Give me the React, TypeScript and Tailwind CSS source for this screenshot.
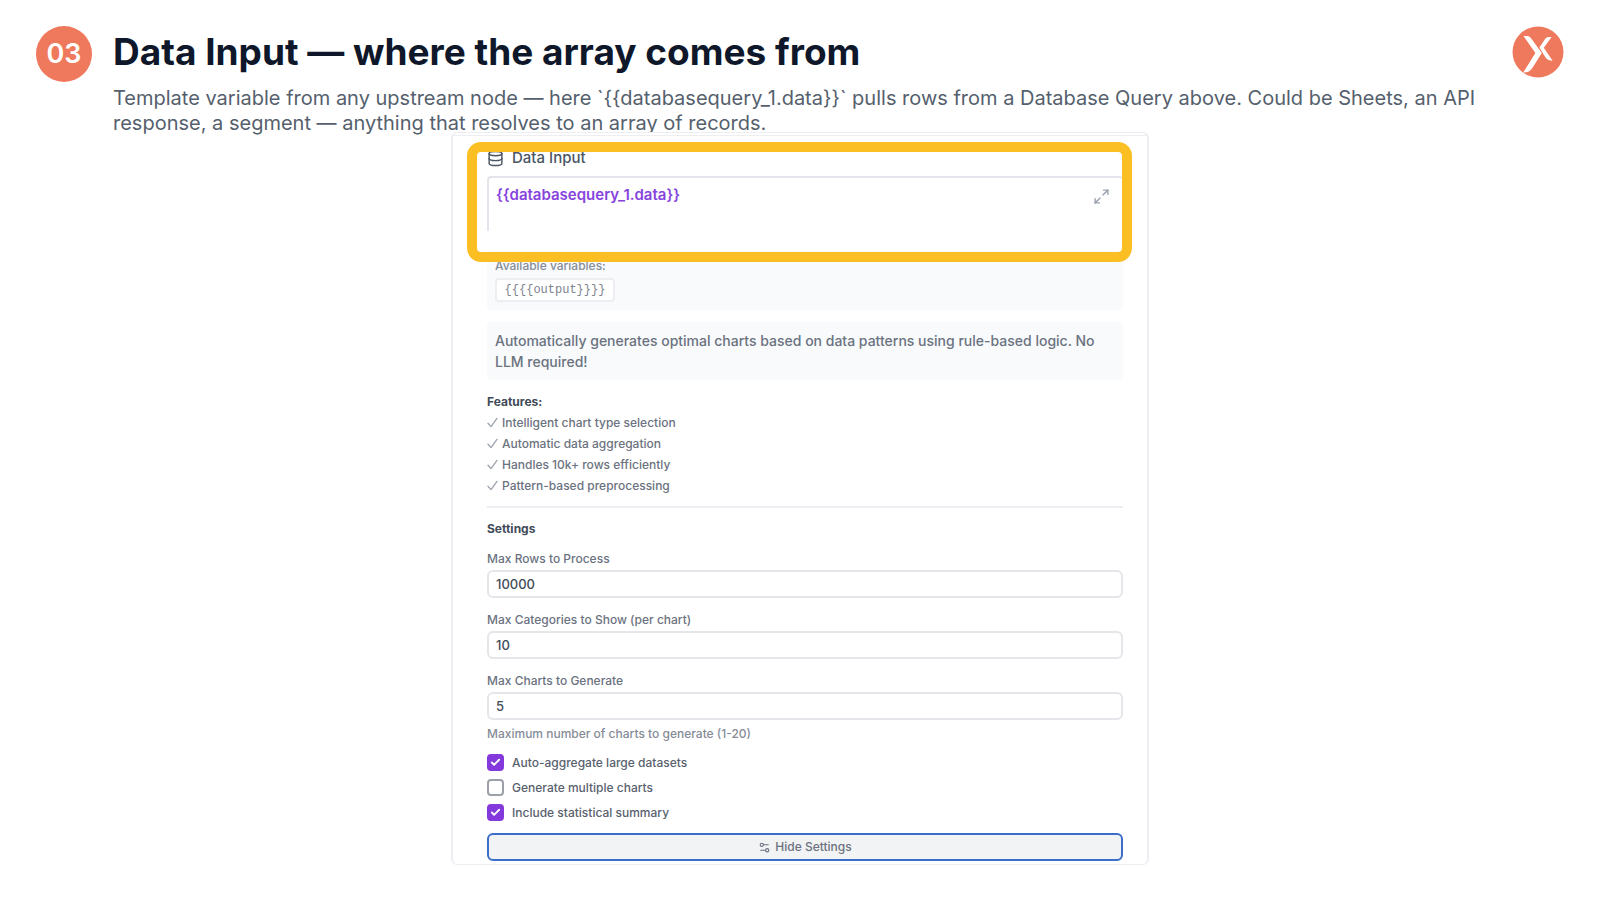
import { Check, Database, Maximize2, Settings2 } from "lucide-react";

const SUBTITLE =
  "Template variable from any upstream node — here `{{databasequery_1.data}}` pulls rows from a Database Query above. Could be Sheets, an API response, a segment — anything that resolves to an array of records.";

const FEATURES = [
  "Intelligent chart type selection",
  "Automatic data aggregation",
  "Handles 10k+ rows efficiently",
  "Pattern-based preprocessing",
];

const LIMITS = [
  { id: "max-rows", label: "Max Rows to Process", value: "10000" },
  { id: "max-categories", label: "Max Categories to Show (per chart)", value: "10" },
  { id: "max-charts", label: "Max Charts to Generate", value: "5" },
];

const OPTIONS = [
  { id: "auto-aggregate", label: "Auto-aggregate large datasets", checked: true },
  { id: "multiple-charts", label: "Generate multiple charts", checked: false },
  { id: "stat-summary", label: "Include statistical summary", checked: true },
];

function Logo() {
  return (
    <svg viewBox="0 0 52 52" className="h-[52px] w-[52px] shrink-0" aria-hidden="true">
      <circle cx="26" cy="26" r="25.5" fill="#ef795c" />
      <path
        d="M11.5 10H15.2Q17.6 10 18.9 11.9L29.8 27L20.2 42.2Q17.4 46.6 11.2 46.6L23.4 27Z"
        fill="#fff"
      />
      <path
        d="M39.6 11H36.6Q34.6 11 33.4 12.6L27.4 21.6L33.4 31.2Q35.8 34.8 40.6 34.8L31.8 21.8Z"
        fill="#fff"
      />
    </svg>
  );
}

function Tick() {
  return (
    <svg viewBox="0 0 11 11" className="h-[11px] w-[11px] shrink-0" fill="none" aria-hidden="true">
      <path
        d="M1 6.2L4 9.6L10 1.4"
        stroke="#a0a6af"
        strokeWidth="1.4"
        strokeLinecap="round"
        strokeLinejoin="round"
      />
    </svg>
  );
}

function SlideHeader() {
  return (
    <header className="flex items-start px-9 pt-[26px]">
      <div className="flex h-14 w-14 shrink-0 items-center justify-center rounded-full bg-[#ef795c] text-[27px] font-semibold text-white">
        03
      </div>
      <div className="ml-[21px] min-w-0 flex-1">
        <h1 className="h-[60px] text-[37px] font-bold leading-[52px] text-[#0f172a]">
          Data Input — where the array comes from
        </h1>
        <p className="max-w-[1380px] text-[20px] leading-[25px] text-[#555f6d]">{SUBTITLE}</p>
      </div>
      <Logo />
    </header>
  );
}

function DataInput() {
  return (
    <section className="relative">
      <div className="flex h-5 items-center gap-2 text-[#4b5563]">
        <Database className="h-[17px] w-[17px]" strokeWidth={2} />
        <label htmlFor="data-input" className="text-[15px] font-medium">
          Data Input
        </label>
      </div>
      <div className="relative mt-2">
        <textarea
          id="data-input"
          defaultValue="{{databasequery_1.data}}"
          className="block h-[55px] w-full resize-none rounded-t border-l-2 border-t-2 border-[#e3e4ec] bg-white p-[7px] text-[15px] font-semibold leading-5 text-[#8644dd] outline-none"
        />
        <button type="button" aria-label="Expand" className="absolute right-[13px] top-3 text-[#9ca3af]">
          <Maximize2 className="h-[17px] w-[17px]" strokeWidth={2} />
        </button>
      </div>
      {/* highlight ring */}
      <div className="pointer-events-none absolute -left-5 -right-[9px] -top-[6px] z-10 h-[120px] rounded-[14px] border-10 border-[#fbbf24]" />
    </section>
  );
}

function Settings() {
  return (
    <section className="mt-[10px] border-t-2 border-[#eceef1] pt-[13px]">
      <h2 className="text-[12px] font-bold leading-4 text-[#424b58]">Settings</h2>
      {LIMITS.map((limit) => (
        <div key={limit.id} className="mt-3">
          <label htmlFor={limit.id} className="block text-[12px] font-medium leading-5 text-[#6b7280]">
            {limit.label}
          </label>
          <input
            id={limit.id}
            type="text"
            defaultValue={limit.value}
            className="mt-px block h-7 w-full rounded-md border-2 border-[#e4e6ea] bg-white px-[7px] text-[13px] font-medium text-[#424b58] outline-none"
          />
        </div>
      ))}
      <p className="mt-1 text-[12px] font-medium leading-5 text-[#868c97]">
        Maximum number of charts to generate (1-20)
      </p>
      <div className="mt-[10px] flex flex-col gap-2">
        {OPTIONS.map((option) => (
          <label
            key={option.id}
            htmlFor={option.id}
            className="flex h-[17px] items-center gap-2 text-[12px] font-medium text-[#59616e]"
          >
            <span className="relative h-[17px] w-[17px]">
              <input
                id={option.id}
                type="checkbox"
                defaultChecked={option.checked}
                className="peer block h-[17px] w-[17px] appearance-none rounded border-2 border-[#9ca0a8] bg-white checked:border-[#8339dc] checked:bg-[#8339dc]"
              />
              <Check
                className="pointer-events-none absolute left-[3px] top-[3px] hidden h-[11px] w-[11px] text-white peer-checked:block"
                strokeWidth={4}
              />
            </span>
            {option.label}
          </label>
        ))}
      </div>
      <button
        type="button"
        className="mt-3 flex h-7 w-full items-center justify-center gap-1 rounded-md border-2 border-[#3b6dcb] bg-[#f2f3f5] text-[12px] font-medium text-[#6b7280]"
      >
        <Settings2 className="h-[13px] w-[13px]" strokeWidth={2} />
        Hide Settings
      </button>
    </section>
  );
}

export default function App() {
  return (
    <div className="min-h-screen bg-white font-['Inter',sans-serif]">
      <SlideHeader />
      <main className="relative mx-auto -mt-1 max-w-[698px] rounded-md border-x-2 border-y border-[#eceef2] bg-white pt-[2px]">
        <div className="border-t border-[#eceef2] pb-[3px] pl-[34px] pr-6 pt-3">
          <DataInput />

          <section className="mt-5 rounded bg-[#f8fafc] px-2 pb-2 pt-[5px]">
            <p className="text-[12px] font-medium leading-5 text-[#868c97]">Available variables:</p>
            <code className="mt-[2px] flex h-6 w-[120px] items-center justify-center rounded border-2 border-[#eceef2] bg-white font-['Liberation_Mono',monospace] text-[12px] text-[#7d838d]">
              {"{{{{output}}}}"}
            </code>
          </section>

          <p className="mt-3 rounded bg-[#f8fafc] px-2 py-2 text-[14px] font-medium leading-[21px] text-[#6b7280]">
            Automatically generates optimal charts based on data patterns using rule-based logic. No
            LLM required!
          </p>

          <section className="mt-[11px]">
            <h2 className="text-[12px] font-bold leading-[21px] text-[#424b58]">Features:</h2>
            <ul>
              {FEATURES.map((feature) => (
                <li
                  key={feature}
                  className="flex items-center gap-1 text-[12px] font-medium leading-[21px] text-[#6b7280]"
                >
                  <Tick />
                  {feature}
                </li>
              ))}
            </ul>
          </section>

          <Settings />
        </div>
      </main>
    </div>
  );
}
